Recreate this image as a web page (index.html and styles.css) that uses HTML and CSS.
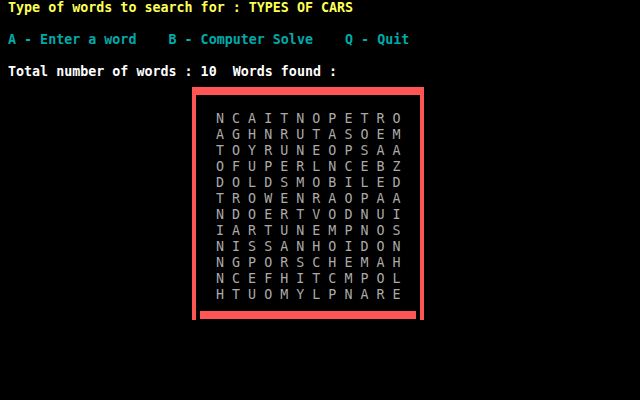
FILE: index.html
```html
<!DOCTYPE html>
<html>
<head>
<meta charset="utf-8">
<link rel="stylesheet" href="styles.css">
</head>
<body>
<div class="screen">
  <div class="line yellow">&nbsp;Type of words to search for : TYPES OF CARS</div>
  <div class="line cyan">&nbsp;A - Enter a word    B - Computer Solve    Q - Quit</div>
  <div class="line white last">&nbsp;Total number of words : 10  Words found :</div>
  <div class="frame">
    <div class="grid">N C A I T N O P E T R O
A G H N R U T A S O E M
T O Y R U N E O P S A A
O F U P E R L N C E B Z
D O L D S M O B I L E D
T R O W E N R A O P A A
N D O E R T V O D N U I
I A R T U N E M P N O S
N I S S A N H O I D O N
N G P O R S C H E M A H
N C E F H I T C M P O L
H T U O M Y L P N A R E</div>
    <div class="bar"></div>
  </div>
</div>
</body>
</html>
```
FILE: styles.css
```css
html, body {
  margin: 0;
  padding: 0;
  background: #000;
}
.screen {
  width: 640px;
  height: 400px;
  background: #000;
  overflow: hidden;
}
.line {
  font-family: "DejaVu Sans Mono", monospace;
  font-weight: bold;
  font-size: 13.33px;
  line-height: 16px;
  height: 16px;
  white-space: pre;
  margin-bottom: 16px;
}
.yellow { color: #FFFF55; }
.cyan { color: #00AAAA; }
.white { color: #FFFFFF; }
.line.last { margin-bottom: 0; }
.frame {
  margin: 7px 0 0 192px;
  width: 224px;
  height: 225px;
  border-top: 8px solid #FF5555;
  border-left: 4px solid #FF5555;
  border-right: 4px solid #FF5555;
  display: flex;
  flex-direction: column;
}
.grid {
  padding: 16px 0 0 20px;
  height: 192px;
  font-family: "DejaVu Sans Mono", monospace;
  font-size: 13.33px;
  line-height: 16px;
  white-space: pre;
  color: #AAAAAA;
}
.bar {
  margin: 8px 4px 0 4px;
  height: 8px;
  background: #FF5555;
}
```
